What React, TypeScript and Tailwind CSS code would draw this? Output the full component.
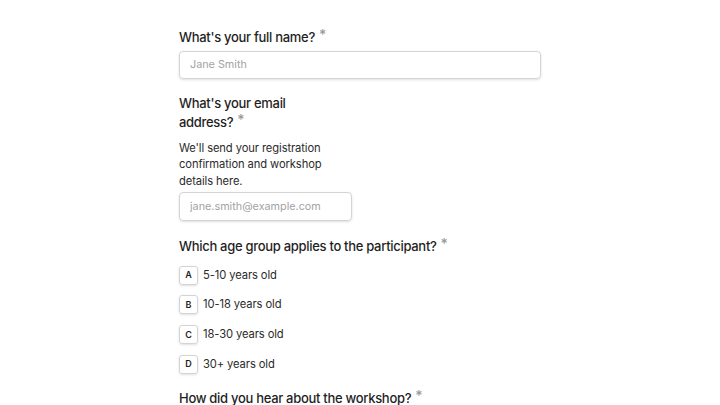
const options = [
  { key: 'A', label: '5-10 years old' },
  { key: 'B', label: '10-18 years old' },
  { key: 'C', label: '18-30 years old' },
  { key: 'D', label: '30+ years old' },
];

function Label({ children }: { children: React.ReactNode }) {
  return (
    <p className="text-[13px] leading-[19.5px] font-medium tracking-[-0.3px] text-[#1f1f1f]">
      {children}
      <span className="relative -top-[2px] ml-[4px] text-[14px] leading-none text-[#9a9a9a]">*</span>
    </p>
  );
}

export default function App() {
  return (
    <div
      className="w-[720px] h-[405px] overflow-hidden bg-white"
      style={{ fontFamily: 'Inter, "Noto Sans", sans-serif' }}
    >
      <div className="ml-[179px] w-[362px] pt-[28px] flex flex-col">
        <Label>What's your full name?</Label>
        <input
          placeholder="Jane Smith"
          className="mt-[3px] h-[28px] w-[362px] rounded-[4px] border border-[#d4d4d4] px-[10px] text-[10.8px] text-[#1f1f1f] placeholder:text-[#a3a3a3] shadow-sm outline-none"
        />

        <div className="mt-[15px] w-[173px]">
          <div className="w-[150px]">
            <Label>What's your email address?</Label>
          </div>
          <p className="mt-[7px] w-[160px] text-[11.2px] leading-[16.5px] tracking-[-0.1px] text-[#2b2b2b]">
            We'll send your registration confirmation and workshop details here.
          </p>
          <input
            placeholder="jane.smith@example.com"
            className="mt-[3px] h-[29px] w-[173px] rounded-[4px] border border-[#d4d4d4] px-[10px] text-[10.8px] text-[#1f1f1f] placeholder:text-[#a3a3a3] shadow-sm outline-none"
          />
        </div>

        <div className="mt-[16px]">
          <Label>Which age group applies to the participant?</Label>
          <div className="mt-[9px] flex flex-col gap-[10.7px]">
            {options.map((o) => (
              <div key={o.key} className="flex items-center gap-[5px]">
                <span className="flex h-[19px] w-[19px] items-center justify-center rounded-[3px] border border-[#d4d4d4] text-[9px] font-semibold text-[#1f1f1f] shadow-sm">
                  {o.key}
                </span>
                <span className="text-[11.2px] tracking-[-0.1px] text-[#2b2b2b]">{o.label}</span>
              </div>
            ))}
          </div>
        </div>

        <div className="mt-[15px]">
          <Label>How did you hear about the workshop?</Label>
        </div>
      </div>
    </div>
  );
}
